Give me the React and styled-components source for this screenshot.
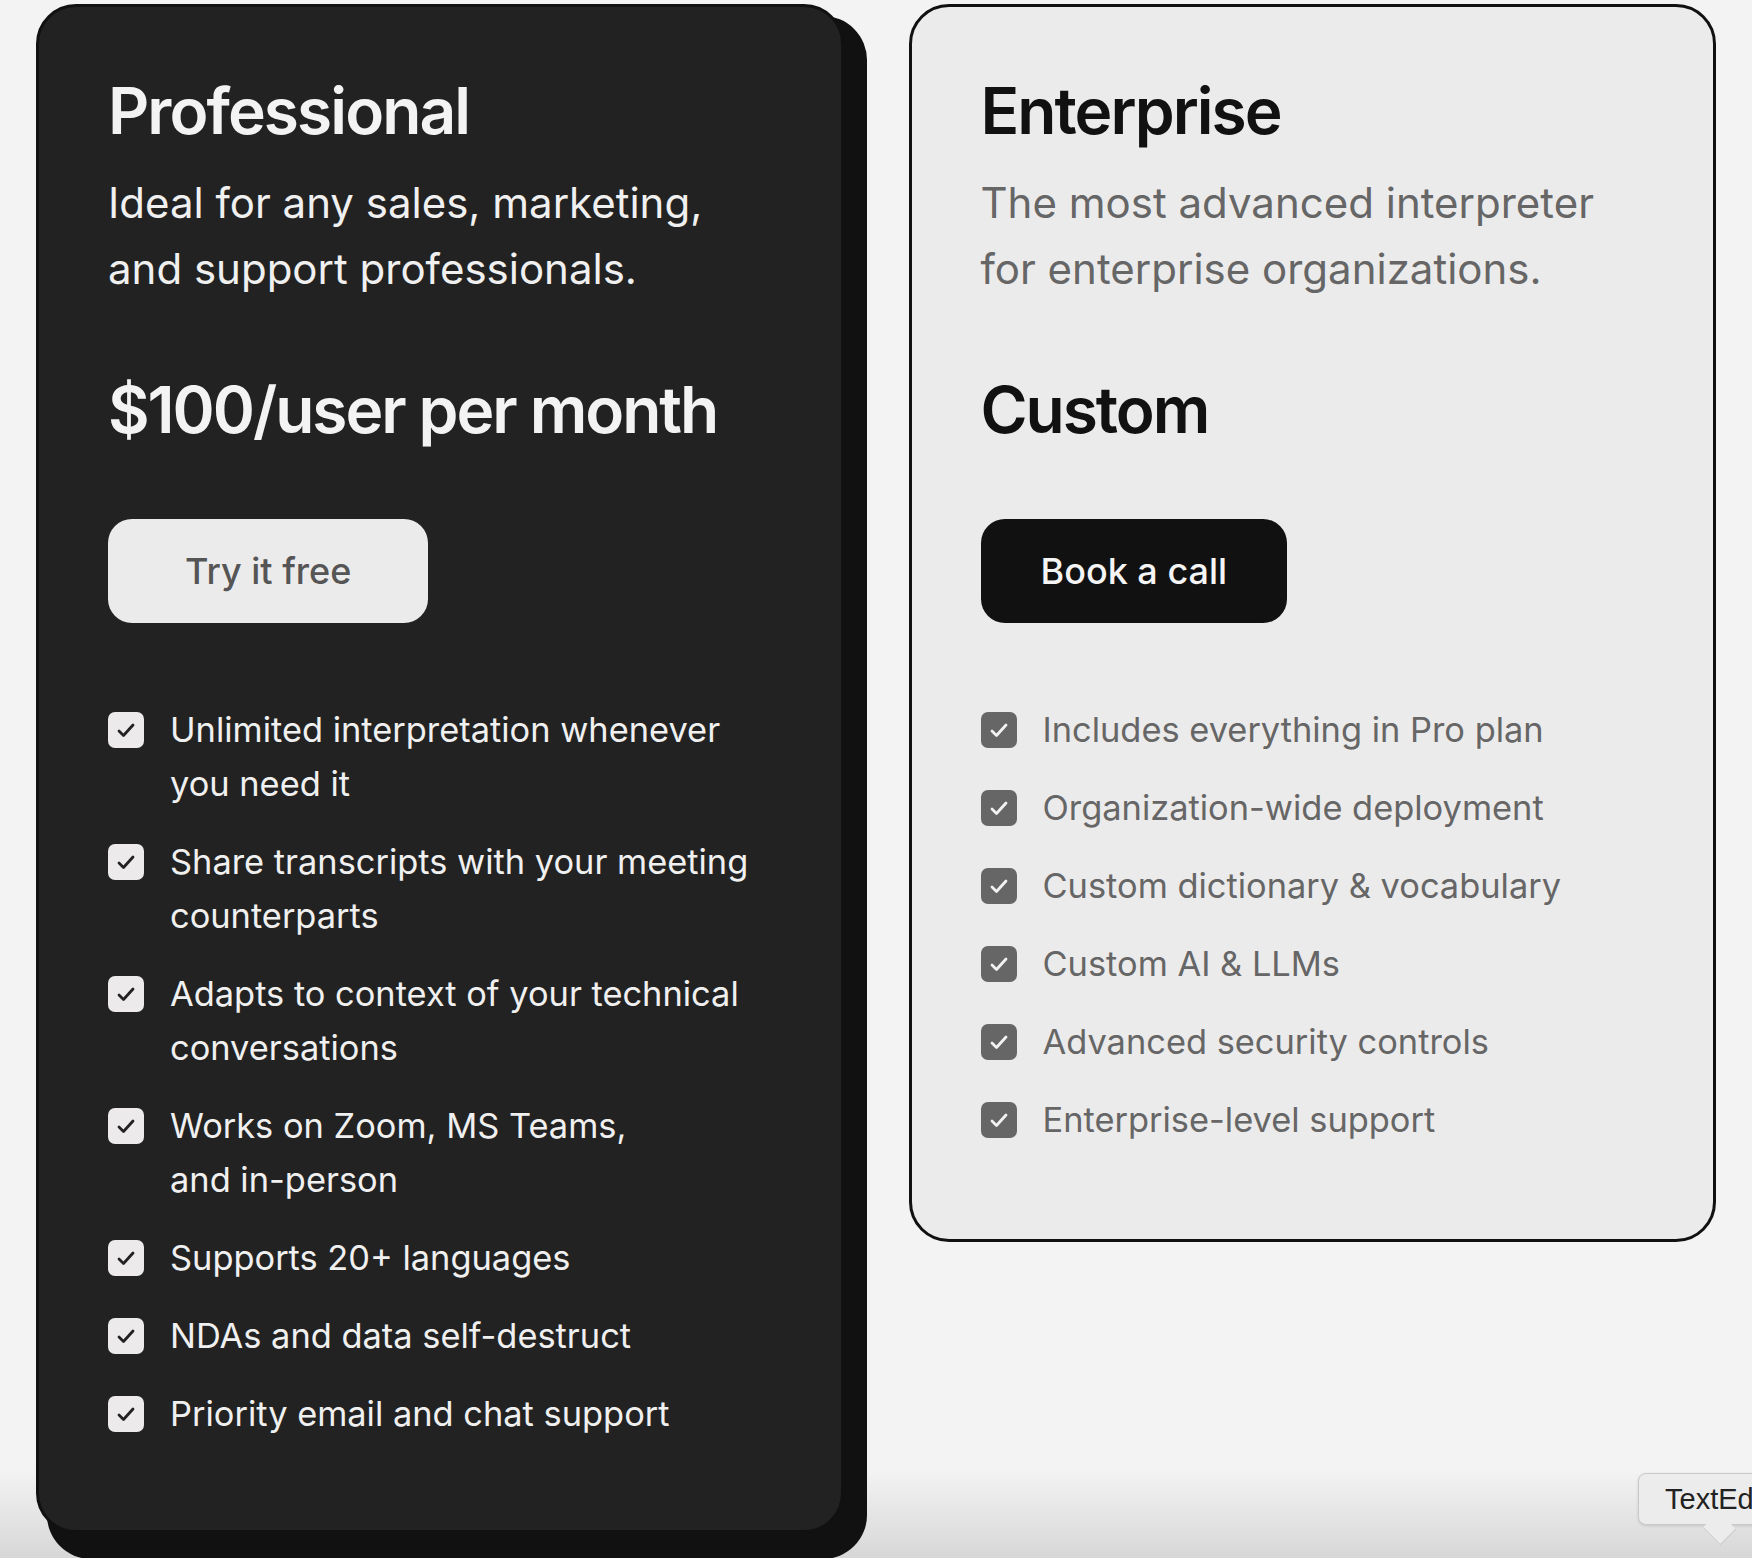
import React from 'react';
import styled, { createGlobalStyle } from 'styled-components';

const GlobalStyle = createGlobalStyle`
  html, body {
    margin: 0;
    padding: 0;
  }
  body {
    font-family: Inter, "Noto Sans", sans-serif;
    -webkit-font-smoothing: antialiased;
  }
`

const Page = styled.div`
  position: relative;
  width: 1752px;
  height: 1558px;
  overflow: hidden;
  box-sizing: border-box;
  padding: 4px 36px 0 36px;
  background: linear-gradient(to bottom, #f3f3f3 0, #f3f3f3 1470px, #d7d7d7 1558px);
`

const Columns = styled.div`
  display: flex;
  align-items: flex-start;
  gap: 65px;
`

// wrapper carries the offset "hard shadow" slab of the dark card
const CardWrap = styled.div`
  position: relative;
  flex: 1;
  isolation: isolate;

  ${p => p.$shadow && `
    &::before {
      content: '';
      position: absolute;
      inset: 12px -23px -26px 11px;
      border-radius: 44px;
      background: #111;
      z-index: -1;
    }
  `}
`

const Card = styled.section`
  position: relative;
  box-sizing: border-box;
  padding: 66px 69px ${p => (p.$dark ? 89 : 92)}px;
  border: 3px solid #111;
  border-radius: 40px;
  background: ${p => (p.$dark ? '#222222' : '#ecebeb')};
  color: ${p => (p.$dark ? '#f3f3f3' : '#111')};
`

const Title = styled.h2`
  margin: 0;
  font-size: 64px;
  line-height: 1.2;
  font-weight: 600;
  letter-spacing: -0.03em;
`

const Subtitle = styled.p`
  margin: 20px 0 0;
  font-size: 42px;
  line-height: 66px;
  font-weight: 400;
  color: ${p => (p.$dark ? '#f0f0f0' : '#666')};
`

const Price = styled.div`
  margin-top: 70px;
  font-size: 64px;
  line-height: 1.2;
  font-weight: 600;
  letter-spacing: -0.032em;
`

const Button = styled.button`
  display: inline-flex;
  align-items: center;
  justify-content: center;
  margin-top: 70px;
  height: 104px;
  padding: 0 ${p => p.$padX}px;
  border: none;
  border-radius: 24px;
  font-family: Inter, sans-serif;
  font-size: 36px;
  font-weight: 500;
  cursor: pointer;
  background: ${p => (p.$dark ? '#111' : '#ecebeb')};
  color: ${p => (p.$dark ? '#f5f5f5' : '#555')};
`

const List = styled.ul`
  list-style: none;
  margin: 80px 0 0;
  padding: 0;
  display: flex;
  flex-direction: column;
  gap: 24px;
`

const Item = styled.li`
  display: flex;
  align-items: flex-start;
  gap: 26px;
  font-size: 34.4px;
  line-height: 54px;
  color: ${p => (p.$dark ? '#f0f0f0' : '#666')};
`

const Box = styled.svg`
  flex: none;
  width: 36px;
  height: 36px;
  margin-top: 9px;
`

const Tooltip = styled.div`
  position: absolute;
  left: 1638px;
  top: 1473px;
  height: 52px;
  padding: 0 30px 0 26px;
  display: flex;
  align-items: center;
  box-sizing: border-box;
  background: #ececec;
  border: 1px solid #c9c9c9;
  border-radius: 8px;
  box-shadow: 0 1px 3px rgba(0, 0, 0, 0.12);
  font-family: "Liberation Sans", Arial, sans-serif;
  font-size: 29px;
  color: #222;
  white-space: nowrap;

  &::after {
    content: '';
    position: absolute;
    left: 68px;
    bottom: -17px;
    width: 24px;
    height: 24px;
    background: #ececec;
    border-right: 1px solid #c9c9c9;
    border-bottom: 1px solid #c9c9c9;
    transform: rotate(45deg) scaleY(0.9);
  }
`

const Check = ({dark}) => (
    <Box viewBox="0 0 36 36">
        <rect x="0" y="0" width="36" height="36" rx="7" fill={dark ? '#eceaea' : '#666'}/>
        <path d="M11 19l4.5 4.5 9.5-10.5" fill="none" stroke={dark ? '#222' : '#f2f2f2'}
              strokeWidth="2.8" strokeLinecap="round" strokeLinejoin="round"/>
    </Box>
)

const proFeatures = [
    'Unlimited interpretation whenever you need it',
    'Share transcripts with your meeting counterparts',
    'Adapts to context of your technical conversations',
    <>Works on Zoom, MS Teams,<br/>and in-person</>,
    'Supports 20+ languages',
    'NDAs and data self-destruct',
    'Priority email and chat support',
]

const enterpriseFeatures = [
    'Includes everything in Pro plan',
    'Organization-wide deployment',
    'Custom dictionary & vocabulary',
    'Custom AI & LLMs',
    'Advanced security controls',
    'Enterprise-level support',
]

const Plan = ({dark, title, subtitle, price, cta, padX, features}) => (
    <CardWrap $shadow={dark}>
        <Card $dark={dark}>
            <Title>{title}</Title>
            <Subtitle $dark={dark}>{subtitle}</Subtitle>
            <Price>{price}</Price>
            <Button $dark={!dark} $padX={padX}>{cta}</Button>
            <List>
                {features.map((f, i) => (
                    <Item key={i} $dark={dark}>
                        <Check dark={dark}/>
                        <span>{f}</span>
                    </Item>
                ))}
            </List>
        </Card>
    </CardWrap>
)

export default function App() {
    return (
        <>
            <GlobalStyle/>
            <Page>
                <Columns>
                    <Plan
                        dark
                        title="Professional"
                        subtitle={<>Ideal for any sales, marketing,<br/>and support professionals.</>}
                        price="$100/user per month"
                        cta="Try it free"
                        padX={77}
                        features={proFeatures}
                    />
                    <Plan
                        title="Enterprise"
                        subtitle={<>The most advanced interpreter<br/>for enterprise organizations.</>}
                        price="Custom"
                        cta="Book a call"
                        padX={60}
                        features={enterpriseFeatures}
                    />
                </Columns>
                <Tooltip>TextEdit</Tooltip>
            </Page>
        </>
    );
}
